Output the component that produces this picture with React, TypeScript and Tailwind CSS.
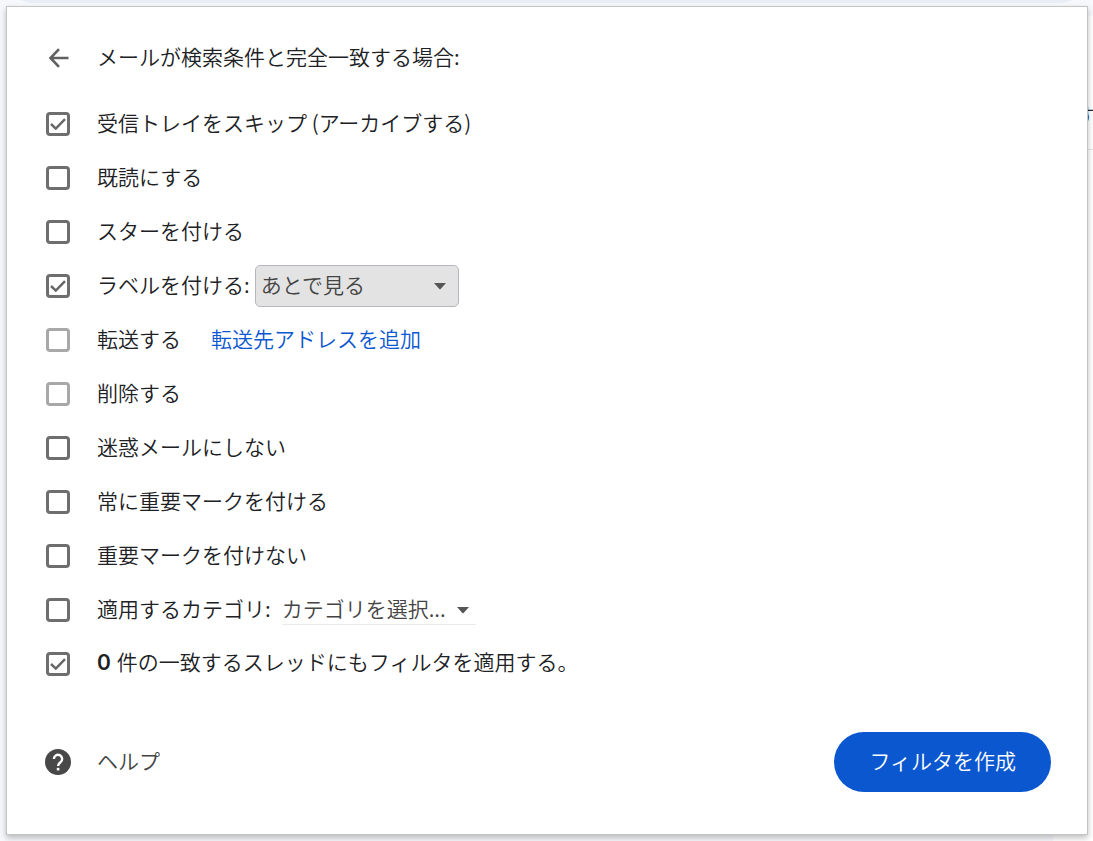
import React, { useState } from 'react';

const actions = [
  { id: 'archive', label: '受信トレイをスキップ (アーカイブする)', checked: true },
  { id: 'read', label: '既読にする' },
  { id: 'star', label: 'スターを付ける' },
  { id: 'label', label: 'ラベルを付ける:', checked: true },
  { id: 'forward', label: '転送する', disabled: true },
  { id: 'delete', label: '削除する', disabled: true },
  { id: 'notSpam', label: '迷惑メールにしない' },
  { id: 'important', label: '常に重要マークを付ける' },
  { id: 'notImportant', label: '重要マークを付けない' },
  { id: 'category', label: '適用するカテゴリ:' },
  { id: 'apply', label: '件の一致するスレッドにもフィルタを適用する。', checked: true },
];

const Caret = ({ className }: { className: string }) => (
  <svg
    viewBox="0 0 14 8"
    aria-hidden="true"
    className={`pointer-events-none absolute top-1/2 h-2 w-3.5 -translate-y-1/2 fill-[#555] ${className}`}
  >
    <path d="M1 1h12L7.6 6.9a.9.9 0 0 1-1.2 0z" />
  </svg>
);

type CheckboxProps = {
  id: string;
  checked: boolean;
  disabled?: boolean;
  onChange: () => void;
};

const Checkbox = ({ id, checked, disabled, onChange }: CheckboxProps) => (
  <span className="relative size-6 shrink-0">
    <input
      id={id}
      type="checkbox"
      checked={checked}
      disabled={disabled}
      onChange={onChange}
      className="block size-6 appearance-none rounded-[4px] border-[3px] border-[#6e6e6e] bg-white disabled:border-[#a8a8a8]"
    />
    {checked && (
      <svg
        viewBox="0 0 24 24"
        aria-hidden="true"
        className="pointer-events-none absolute inset-0 size-6 fill-none stroke-[#666]"
      >
        <path d="M5 12l4.8 4.6L19 7.2" strokeWidth="2.5" />
      </svg>
    )}
  </span>
);

// The mailbox that shows around the edges of the dialog
const Mailbox = () => (
  <div aria-hidden="true" className="absolute inset-0 overflow-hidden bg-[#f6f8fc]">
    <div className="absolute -top-14 left-1 right-1 h-[59px] rounded-full bg-[#e9eef6]" />
    <div className="absolute bottom-0 right-0 top-4 w-10 bg-white">
      <div className="h-[134px] border-b border-[#e4e6e9] pl-[22px] pt-[82px]">
        <span className="block whitespace-nowrap text-[21px] leading-8">す</span>
      </div>
    </div>
  </div>
);

const App = () => {
  const [selected, setSelected] = useState<string[]>(
    actions.filter((a) => a.checked).map((a) => a.id)
  );

  const toggle = (id: string) =>
    setSelected((prev) =>
      prev.includes(id) ? prev.filter((p) => p !== id) : [...prev, id]
    );

  return (
    <div className="relative p-1.5 pr-[5px] font-['Noto_Sans_CJK_JP',sans-serif] text-[21px] font-[350] leading-8 text-[#202124]">
      <Mailbox />
      <form
        onSubmit={(e) => e.preventDefault()}
        className="relative border border-[#c4c4c4] bg-white pb-[42px] pl-[39px] pr-9 pt-6 shadow-[0_3px_6px_rgba(0,0,0,0.25)]"
      >
        <div className="flex h-[54px] items-center gap-[27px]">
          <button type="button" aria-label="戻る" className="size-6">
            <svg
              viewBox="0 0 24 24"
              className="size-6 fill-none stroke-[#606060]"
              strokeWidth="2.6"
            >
              <path d="M22.5 12H4.5M13 3.2L4.5 12l8.500 8.800" />
            </svg>
          </button>
          <h2 className="pb-1">メールが検索条件と完全一致する場合:</h2>
        </div>

        <ul className="mt-3">
          {actions.map((action) => (
            <li key={action.id} className="flex h-[54px] items-center">
              <Checkbox
                id={action.id}
                checked={selected.includes(action.id)}
                disabled={action.disabled}
                onChange={() => toggle(action.id)}
              />
              <label htmlFor={action.id} className="ml-[27px] pb-1">
                {action.id === 'apply' && (
                  <b className="mr-1.5 font-['Inter',sans-serif] font-semibold">0</b>
                )}
                {action.label}
              </label>

              {action.id === 'label' && (
                <div className="relative ml-[5px]">
                  <select
                    aria-label="ラベル"
                    className="block h-[42px] w-[204px] appearance-none rounded-[5px] border border-[#b4b8be] bg-[#e3e3e3] pb-1 pl-[5px] pr-8 text-[#444]"
                  >
                    <option>あとで見る</option>
                  </select>
                  <Caret className="right-3" />
                </div>
              )}
              {action.id === 'forward' && (
                <a href="#forward" className="ml-[30px] pb-1 text-[#0b57d0]">
                  転送先アドレスを追加
                </a>
              )}
              {action.id === 'category' && (
                <div className="relative ml-[11px]">
                  <select
                    aria-label="カテゴリ"
                    className="block h-[30px] w-[194px] appearance-none border-b border-[#e8eaed] bg-white pb-1 leading-6 text-[#444]"
                  >
                    <option>カテゴリを選択...</option>
                  </select>
                  <Caret className="right-1.5" />
                </div>
              )}
            </li>
          ))}
        </ul>

        <div className="mt-[41px] flex items-center justify-between">
          <a href="#help" className="flex items-center gap-[26px] text-[#444]">
            <svg viewBox="0 0 24 24" aria-hidden="true" className="-ml-px size-[26px]">
              <circle cx="12" cy="12" r="12" fill="#484848" />
              <path
                d="M8.2 9.2a3.8 3.8 0 1 1 6.2 2.9c-1.3 1.1-2.3 1.7-2.3 3.6"
                fill="none"
                stroke="#fff"
                strokeWidth="2.2"
              />
              <path d="M10.9 17.4h2.4v2.4h-2.4z" fill="#fff" />
            </svg>
            <span className="pb-1">ヘルプ</span>
          </a>
          <button
            type="submit"
            className="h-[60px] rounded-full bg-[#0b57d0] px-[35px] pb-1 text-white"
          >
            フィルタを作成
          </button>
        </div>
      </form>
    </div>
  );
};

export default App;
